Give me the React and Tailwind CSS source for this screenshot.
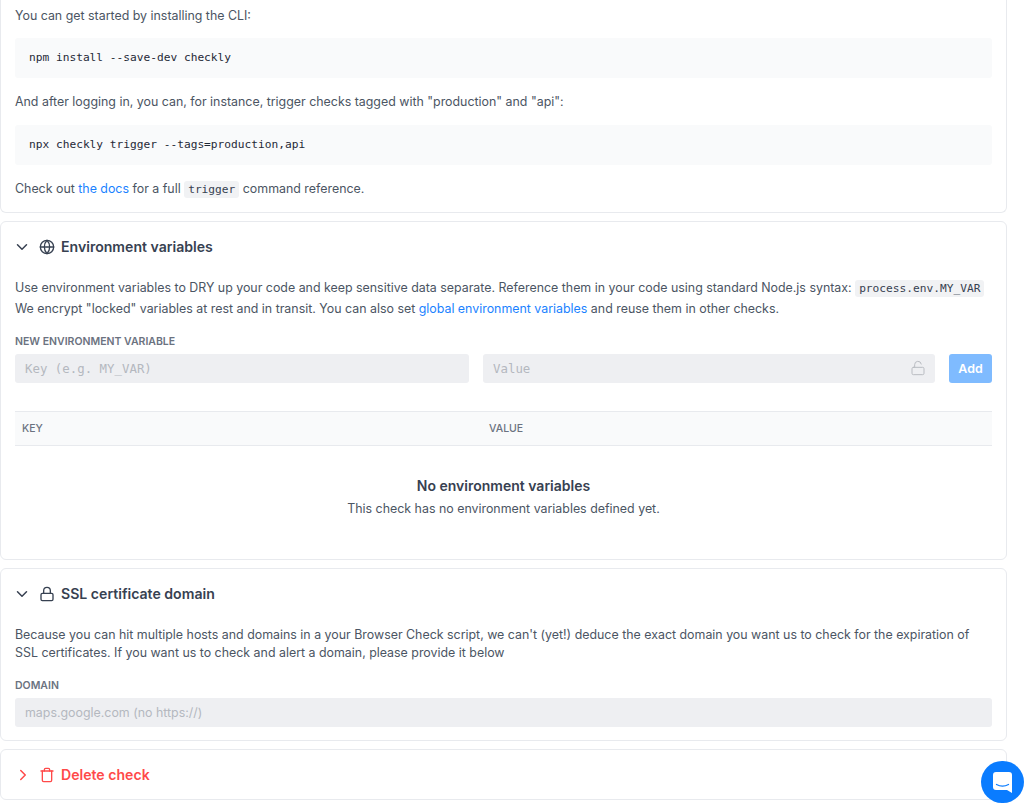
import React from "react";
import { ChevronDown, ChevronRight, Globe, Lock, LockOpen, Trash } from "lucide-react";

const mono = "font-['DejaVu_Sans_Mono',monospace]";

const Code = ({ children }) => (
  <code className={`${mono} bg-[#f1f2f4] rounded-[3px] px-[4px] py-[2px] text-[11.2px] text-[#374151]`}>{children}</code>
);

const CodeBlock = ({ children }) => (
  <pre className={`${mono} bg-[#f9fafb] rounded-[3px] h-[40px] flex items-center px-[14px] text-[11.2px] text-[#1f2937]`}>{children}</pre>
);

const Link = ({ children }) => <a className="text-[#1a82ff]">{children}</a>;

const SectionHeader = ({ icon: Icon, title, open = true, danger = false }) => {
  const Chevron = open ? ChevronDown : ChevronRight;
  const color = danger ? "text-[#ff4949]" : "text-[#374151]";
  return (
    <div className={`flex items-center h-[49px] ${open ? "pl-[12px]" : "pl-[13px]"} ${color}`}>
      <Chevron className="w-[18px] h-[18px]" strokeWidth={2} />
      <Icon className={`w-[16px] h-[16px] ${open ? "ml-[8px]" : "ml-[7px]"}`} strokeWidth={2} />
      <h3 className="ml-[6px] text-[14.1px] font-semibold">{title}</h3>
    </div>
  );
};

const Label = ({ children }) => (
  <label className="block text-[10.5px] font-semibold uppercase text-[#6b7280] leading-[14px]">{children}</label>
);

const TextInput = ({ placeholder, monoFont = false }) => (
  <input
    disabled
    placeholder={placeholder}
    className={`w-full h-[29px] rounded-[3px] bg-[#eeeff2] px-[10px] text-[12.4px] placeholder:text-[#b4b8bf] ${monoFont ? mono : ""}`}
  />
);

const App = () => {
  return (
    <div className="relative h-[807px] w-[1024px] overflow-hidden bg-white font-['Inter',sans-serif] text-[12.4px] text-[#4b5563]">
      <div className="flex flex-col gap-[8px] w-[1007px]">
        {/* CLI section, scrolled so its header is off screen */}
        <section className="h-[213px] rounded-b-[6px] border border-t-0 border-[#e8eaee] px-[14px] pt-[6px]">
          <p className="leading-[20px]">You can get started by installing the CLI:</p>
          <div className="mt-[12px]">
            <CodeBlock>npm install --save-dev checkly</CodeBlock>
          </div>
          <p className="mt-[14px] leading-[20px]">
            And after logging in, you can, for instance, trigger checks tagged with "production" and "api":
          </p>
          <div className="mt-[13px]">
            <CodeBlock>npx checkly trigger --tags=production,api</CodeBlock>
          </div>
          <p className="mt-[14px] leading-[20px]">
            Check out <Link>the docs</Link> for a full <Code>trigger</Code> command reference.
          </p>
        </section>

        <section className="h-[339px] rounded-[6px] border border-[#e8eaee]">
          <SectionHeader icon={Globe} title="Environment variables" />
          <div className="px-[14px] pt-[7px]">
            <p className="leading-[20px]">
              Use environment variables to DRY up your code and keep sensitive data separate. Reference them in your code using standard Node.js syntax: <Code>process.env.MY_VAR</Code>
              <br />
              We encrypt "locked" variables at rest and in transit. You can also set <Link>global environment variables</Link> and reuse them in other checks.
            </p>
            <div className="mt-[16px]">
              <Label>New environment variable</Label>
            </div>
            <div className="mt-[5px] flex">
              <div className="w-[454px] shrink-0">
                <TextInput placeholder="Key (e.g. MY_VAR)" monoFont />
              </div>
              <div className="relative ml-[14px] w-[452px] shrink-0">
                <TextInput placeholder="Value" monoFont />
                <LockOpen className="absolute right-[9px] top-[6px] w-[16px] h-[16px] text-[#b9bcc2]" strokeWidth={1.5} />
              </div>
              <button className="ml-[14px] h-[29px] w-[43px] shrink-0 rounded-[3px] bg-[#7fbbff] pt-[1px] text-[12.4px] font-semibold text-white">Add</button>
            </div>
            <div className="mt-[28px] h-[35px] flex items-center border-y border-[#e8eaee] bg-[#f9fafb] text-[10.5px] font-medium uppercase text-[#6b7280]">
              <div className="w-[474px] pl-[7px]">Key</div>
              <div>Value</div>
            </div>
            <div className="mt-[30px] text-center">
              <h4 className="text-[14px] font-semibold leading-[20px] text-[#374151]">No environment variables</h4>
              <p className="mt-[3px] leading-[20px]">This check has no environment variables defined yet.</p>
            </div>
          </div>
        </section>

        <section className="h-[173px] rounded-[6px] border border-[#e8eaee]">
          <SectionHeader icon={Lock} title="SSL certificate domain" />
          <div className="px-[14px] pt-[7px]">
            <p className="leading-[18px] pt-[1px]">
              Because you can hit multiple hosts and domains in a your Browser Check script, we can't (yet!) deduce the exact domain you want us to check for the expiration of SSL certificates. If you want us to check and alert a domain, please provide it below
            </p>
            <div className="mt-[17px]">
              <Label>Domain</Label>
            </div>
            <div className="mt-[5px]">
              <TextInput placeholder="maps.google.com (no https://)" />
            </div>
          </div>
        </section>

        <section className="h-[51px] rounded-[6px] border border-[#e8eaee]">
          <SectionHeader icon={Trash} title="Delete check" open={false} danger />
        </section>
      </div>

      {/* chat launcher */}
      <button className="absolute right-0 top-[761px] flex h-[42px] w-[43px] items-center justify-center rounded-full bg-[#0a7cff]">
        <svg width="19" height="21" viewBox="0 0 19 21">
          <path d="M3 0h13a3 3 0 0 1 3 3v18l-5-3H3a3 3 0 0 1-3-3V3a3 3 0 0 1 3-3z" fill="#fff" />
          <path d="M3.5 12.5c3.5 2 8.5 2 12 0" fill="none" stroke="#0a7cff" strokeWidth="1.3" strokeLinecap="round" />
        </svg>
      </button>
    </div>
  );
};

export default App;
